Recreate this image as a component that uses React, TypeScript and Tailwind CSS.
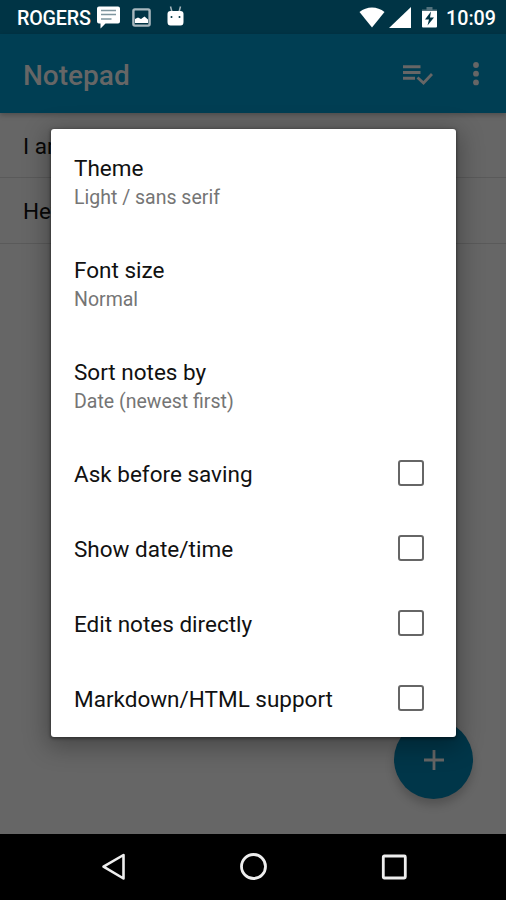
import React from "react";

const listItems = [
    { title: "Theme", summary: "Light / sans serif" },
    { title: "Font size", summary: "Normal" },
    { title: "Sort notes by", summary: "Date (newest first)" },
];

const checkItems = ["Ask before saving", "Show date/time", "Edit notes directly", "Markdown/HTML support"];

const notes = ["I am", "Hey"];

function StatusBar() {
    return (
        <div className="h-[34px] bg-[#003445] flex items-center text-white text-[19.7px] font-medium leading-none shrink-0">
            <span className="ml-[17px] mt-[3px] w-[74px] tracking-[-0.2px]">ROGERS</span>
            <svg className="ml-[6px]" width="23" height="23" viewBox="0 0 23 23">
                <path d="M2 0.5h19q2 0 2 2v13q0 2-2 2H8.500L3.500 22.500V17.500H2q-2 0-2-2v-13q0-2 2-2z" fill="#fff" />
                <path d="M4 4.500h15M4 8.500h15M4 13h10.500" stroke="#7e959e" strokeWidth="1.700" />
            </svg>
            <svg className="ml-[12px] mt-px" width="19" height="19" viewBox="0 0 19 19">
                <rect x="1.400" y="1.400" width="16.200" height="16.200" rx="1.500" fill="none" stroke="#a8b8be" strokeWidth="2.400" />
                <path d="M3 15v-4l3-1.500 3 1.500 3.500-2.500 3.500 3v3.500z" fill="#fff" />
            </svg>
            <svg className="ml-[16px] -mt-[3px]" width="17" height="20" viewBox="0 0 17 20">
                <path d="M3.500 0.500L5 6M13.500 0.500L12 6" stroke="#a8b8be" strokeWidth="1.500" />
                <path d="M0.500 8Q0.500 5 3.500 5h10Q16.500 5 16.500 8v8q0 3.500-3 3.500h-10q-3 0-3-3.500z" fill="#fff" />
                <circle cx="4.500" cy="11" r="1" fill="#003445" />
                <circle cx="12.500" cy="11" r="1" fill="#003445" />
            </svg>
            <svg className="ml-auto" width="26" height="21" viewBox="0 0 26 21">
                <path d="M0.500 5Q6 0.500 13 0.500T25.500 5L13 20.500z" fill="#fff" />
            </svg>
            <svg className="ml-[4px] mt-px" width="22" height="21" viewBox="0 0 22 21">
                <path d="M0 21L22 0v21z" fill="#fff" />
            </svg>
            <svg className="ml-[11px]" width="15" height="21" viewBox="0 0 15 21">
                <path d="M4.500 0h6v2.500H15V6H0V2.500h4.500z" fill="#54727d" />
                <path d="M0 4h15v15.500q0 1-1 1H1q-1 0-1-1z" fill="#fff" />
                <path d="M9 4.500L3 12.500h4L5.500 18.500 12 10.500H8z" fill="#003445" />
            </svg>
            <span className="ml-[9px] mt-[3px] mr-[10px]">10:09</span>
        </div>
    );
}

function Toolbar() {
    return (
        <div className="h-[79px] bg-[#003e53] flex items-center shrink-0 shadow-[0_2px_5px_rgba(0,0,0,0.25)] relative">
            <h1 className="ml-[23px] mt-[5px] text-[28px] font-medium text-[#666] leading-none">Notepad</h1>
            <svg className="ml-auto mt-[2px]" width="30" height="20" viewBox="0 0 30 20">
                <path d="M0 1.800h17.500M0 7.500h17.500M0 13.200h12" stroke="#666" strokeWidth="2.900" fill="none" />
                <path d="M14.500 12.500L20.500 18L29 9" stroke="#666" strokeWidth="2.800" fill="none" />
            </svg>
            <svg className="ml-[40px] mr-[27px]" width="6" height="24" viewBox="0 0 6 24">
                <circle cx="3" cy="3" r="2.900" fill="#666" />
                <circle cx="3" cy="11.700" r="2.900" fill="#666" />
                <circle cx="3" cy="20.400" r="2.900" fill="#666" />
            </svg>
        </div>
    );
}

function SettingsDialog() {
    return (
        <div className="absolute left-[51px] top-[129px] w-[405px] h-[608px] rounded-[3px] bg-white pt-px shadow-[0_6px_24px_4px_rgba(0,0,0,0.3),0_1px_3px_1px_rgba(0,0,0,0.35)]">
            {listItems.map((item) => (
                <div key={item.title} className="h-[102px] px-[23px] pt-[3px] flex flex-col justify-center">
                    <span className="text-[22.500px] leading-[30px] text-[#111]">{item.title}</span>
                    <span className="text-[19.500px] leading-[30px] text-[#757575]">{item.summary}</span>
                </div>
            ))}
            {checkItems.map((label) => (
                <label key={label} className="h-[75px] pl-[23px] pr-[32px] pb-px flex items-center justify-between">
                    <span className="text-[22.500px] leading-[30px] text-[#111] mt-px">{label}</span>
                    <span className="w-[26px] h-[26px] border-2 border-[#666] rounded-[3px]" />
                </label>
            ))}
        </div>
    );
}

function NavBar() {
    return (
        <div className="h-[66px] bg-black flex items-center shrink-0">
            <svg className="ml-[101px]" width="25" height="28" viewBox="0 0 25 28" fill="none" stroke="#eee" strokeWidth="2.600" strokeLinejoin="round">
                <path d="M22.500 2v23.500L2.500 13.700z" />
            </svg>
            <svg className="ml-[113px]" width="28" height="28" viewBox="0 0 28 28" fill="none" stroke="#eee" strokeWidth="2.800">
                <circle cx="14.500" cy="13.500" r="12" />
            </svg>
            <svg className="ml-[114px]" width="26" height="26" viewBox="0 0 26 26" fill="none" stroke="#eee" strokeWidth="2.800">
                <rect x="2.300" y="2" width="22" height="22" rx="1" />
            </svg>
        </div>
    );
}

export default function App() {
    return (
        <div className="relative w-[506px] h-[900px] overflow-hidden bg-[#666] flex flex-col font-[Roboto,sans-serif]">
            <StatusBar />
            <Toolbar />
            <div className="flex-1">
                {notes.map((note) => (
                    <div key={note} className="h-[66px] first:h-[65px] pt-[3px] border-b border-[#5a5a5a] px-[23px] flex items-center text-[22.500px] text-[#070707]">
                        {note}
                    </div>
                ))}
            </div>
            <NavBar />

            {/* Floating add button */}
            <div className="absolute left-[394px] top-[720px] w-[79px] h-[79px] rounded-full bg-[#003649] flex items-center justify-center shadow-[0_6px_10px_rgba(0,0,0,0.2)]">
                <svg width="20" height="20" viewBox="0 0 20 20" stroke="#666" strokeWidth="2.800">
                    <path d="M10 0v20M0 10h20" />
                </svg>
            </div>

            <SettingsDialog />
        </div>
    );
}
